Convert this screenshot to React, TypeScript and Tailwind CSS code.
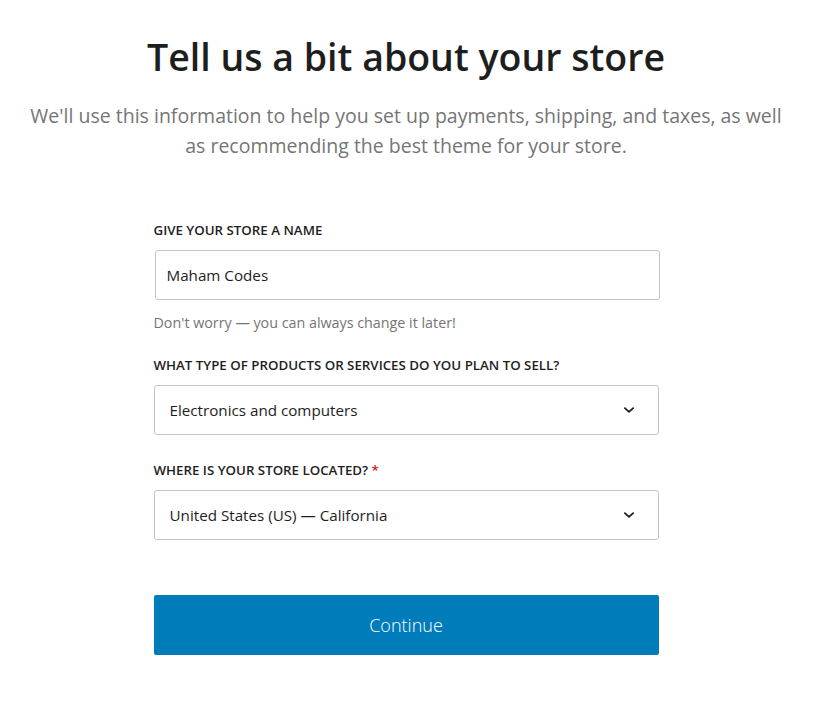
import React from 'react';

const Chevron = () => (
  <svg width="18" height="18" viewBox="0 0 24 24" fill="none" stroke="#1e1e1e" strokeWidth="2.4" strokeLinecap="round" strokeLinejoin="round">
    <path d="M6.5 9.5l5.5 5 5.5-5" />
  </svg>
);

const SelectBox = ({ value }: { value: string }) => (
  <div className="flex h-[50px] w-[505px] items-center justify-between rounded-[3px] border border-[#c3c4c7] bg-white pl-[15px] pr-[20px]">
    <span className="text-[15.2px] text-[#1e1e1e]">{value}</span>
    <Chevron />
  </div>
);

const App: React.FC = () => {
  return (
    <div className="min-h-screen bg-white font-['Open_Sans',sans-serif]">
      <div className="flex w-[812px] flex-col items-center pt-[27px]">
        {/* Header */}
        <h1 className="text-[37.5px] font-semibold leading-[60px] text-[#1e1e1e]">
          Tell us a bit about your store
        </h1>
        <p className="mt-[14px] w-[760px] text-center text-[19.5px] leading-[30px] text-[#757575]">
          We'll use this information to help you set up payments, shipping, and taxes, as well as recommending the best theme for your store.
        </p>

        {/* Form */}
        <div className="mt-[60px] flex w-[505px] flex-col">
          <label className="text-[13.3px] font-semibold uppercase text-[#1e1e1e]">
            Give your store a name
          </label>
          <div className="ml-px mt-[9px] flex h-[50px] w-[505px] items-center rounded-[3px] border border-[#c3c4c7] px-[11px]">
            <span className="text-[15.2px] text-[#1e1e1e]">Maham Codes</span>
          </div>
          <p className="mt-[12px] text-[14.3px] text-[#757575]">Don't worry — you can always change it later!</p>

          <label className="mt-[23px] text-[13.3px] font-semibold uppercase text-[#1e1e1e]">
            What type of products or services do you plan to sell?
          </label>
          <div className="mt-[9px]">
            <SelectBox value="Electronics and computers" />
          </div>

          <label className="mt-[26px] text-[13.3px] font-semibold uppercase text-[#1e1e1e]">
            Where is your store located? <span className="text-[#cc1818]">*</span>
          </label>
          <div className="mt-[9px]">
            <SelectBox value="United States (US) — California" />
          </div>

          <button className="mt-[55px] h-[60px] w-[505px] rounded-[2px] bg-[#007cba] text-[18px] font-light text-white">
            Continue
          </button>
        </div>
      </div>
    </div>
  );
};

export default App;
